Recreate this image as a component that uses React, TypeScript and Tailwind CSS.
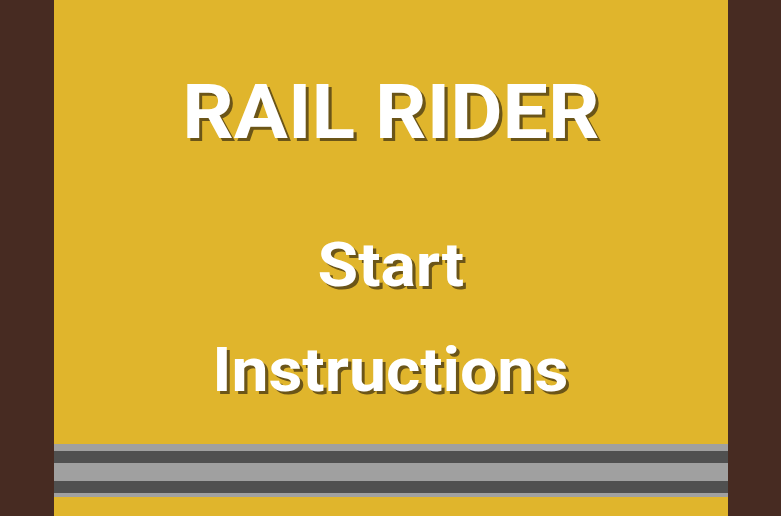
export default function App() {
  const shadow = "[text-shadow:3px_3px_0_#6b5518]";
  return (
    <div className="w-[781px] h-[516px] bg-[#472b22] flex justify-center overflow-hidden">
      <div className="w-[674px] h-full bg-[#e0b52c] flex flex-col items-center font-['Roboto',sans-serif] font-bold text-white">
        <h1 className={`mt-[74px] text-[76px] leading-none scale-x-[1.06] ${shadow}`}>RAIL RIDER</h1>
        <div className="flex flex-col items-center">
          <button className={`mt-[84px] text-[62px] leading-none scale-x-[1.065] ${shadow}`}>Start</button>
          <button className={`mt-[43px] text-[62px] leading-none scale-x-[1.065] ${shadow}`}>Instructions</button>
        </div>
        {/* track */}
        <div className="mt-auto mb-[19px] w-full flex flex-col">
          <div className="h-[7px] bg-[#a0a0a0]" />
          <div className="h-[12px] bg-[#505050]" />
          <div className="h-[18px] bg-[#a0a0a0]" />
          <div className="h-[12px] bg-[#505050]" />
          <div className="h-[4px] bg-[#a0a0a0]" />
        </div>
      </div>
    </div>
  );
}
